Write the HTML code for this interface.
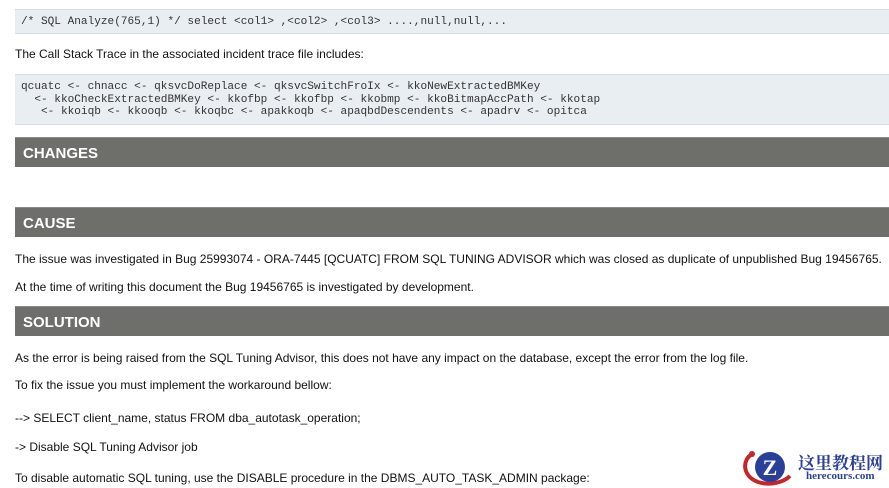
<!DOCTYPE html>
<html><head><meta charset="utf-8"><style>
body{margin:0;width:889px;height:488px;overflow:hidden;background:#fff;font-family:"Liberation Sans",Arial,sans-serif;font-size:12px;color:#111;position:relative}
.code{position:absolute;left:15px;width:874px;background:#e9eef3;border-top:1px solid #d5dce3;border-bottom:1px solid #d5dce3;font-family:"Liberation Mono",monospace;font-size:11.1px;color:#333;white-space:pre;line-height:12.5px;padding-left:6px;box-sizing:border-box;overflow:hidden}
.bar{position:absolute;left:15px;width:874px;height:30px;background:#6e6e6a;color:#fff;font-weight:bold;font-size:15px;line-height:31px;padding-left:8px;box-sizing:border-box;border-top:1px solid #8a8a86}
.t{position:absolute;left:15px;white-space:nowrap}
</style></head><body>
<div class="code" style="top:9px;height:25px;line-height:24px">/* SQL Analyze(765,1) */ select &lt;col1&gt; ,&lt;col2&gt; ,&lt;col3&gt; ....,null,null,...</div>
<div class="t" style="top:47px">The Call Stack Trace in the associated incident trace file includes:</div>
<div class="code" style="top:74px;height:51px;padding-top:6px">qcuatc &lt;- chnacc &lt;- qksvcDoReplace &lt;- qksvcSwitchFroIx &lt;- kkoNewExtractedBMKey
  &lt;- kkoCheckExtractedBMKey &lt;- kkofbp &lt;- kkofbp &lt;- kkobmp &lt;- kkoBitmapAccPath &lt;- kkotap
   &lt;- kkoiqb &lt;- kkooqb &lt;- kkoqbc &lt;- apakkoqb &lt;- apaqbdDescendents &lt;- apadrv &lt;- opitca</div>
<div class="bar" style="top:137px">CHANGES</div>
<div class="bar" style="top:207px">CAUSE</div>
<div class="t" style="top:252px">The issue was investigated in Bug 25993074 - ORA-7445 [QCUATC] FROM SQL TUNING ADVISOR which was closed as duplicate of unpublished Bug 19456765.</div>
<div class="t" style="top:280px">At the time of writing this document the Bug 19456765 is investigated by development.</div>
<div class="bar" style="top:306px">SOLUTION</div>
<div class="t" style="top:351px">As the error is being raised from the SQL Tuning Advisor, this does not have any impact on the database, except the error from the log file.</div>
<div class="t" style="top:378px">To fix the issue you must implement the workaround bellow:</div>
<div class="t" style="top:411px">--&gt; SELECT client_name, status FROM dba_autotask_operation;</div>
<div class="t" style="top:440px">-&gt; Disable SQL Tuning Advisor job</div>
<div class="t" style="top:471px">To disable automatic SQL tuning, use the DISABLE procedure in the DBMS_AUTO_TASK_ADMIN package:</div>
<div style="position:absolute;left:738px;top:442px;width:151px;height:46px;background:#fff"></div>
<svg style="position:absolute;left:740px;top:446px" width="56" height="42" viewBox="0 0 56 42">
<path d="M12 8 C2 14 2 30 18 36 C30 40 44 36 50 30" stroke="#c8242a" stroke-width="4" fill="none"/>
<circle cx="12" cy="8" r="3" fill="#c8242a"/>
<circle cx="30" cy="21" r="15" fill="#2a3f9a"/>
<text x="30" y="29" font-family="Liberation Serif,serif" font-weight="bold" font-size="22" fill="#fff" text-anchor="middle">Z</text>
</svg>
<div style="position:absolute;left:798px;top:449px;font-family:'Liberation Serif','Noto Serif CJK SC',serif;font-weight:bold;font-size:17px;color:#2a3f9a">这里教程网</div>
<div style="position:absolute;left:806px;top:470px;font-family:'Liberation Serif',serif;font-weight:bold;font-size:11px;color:#2a3f9a">herecours.com</div>
</body></html>
